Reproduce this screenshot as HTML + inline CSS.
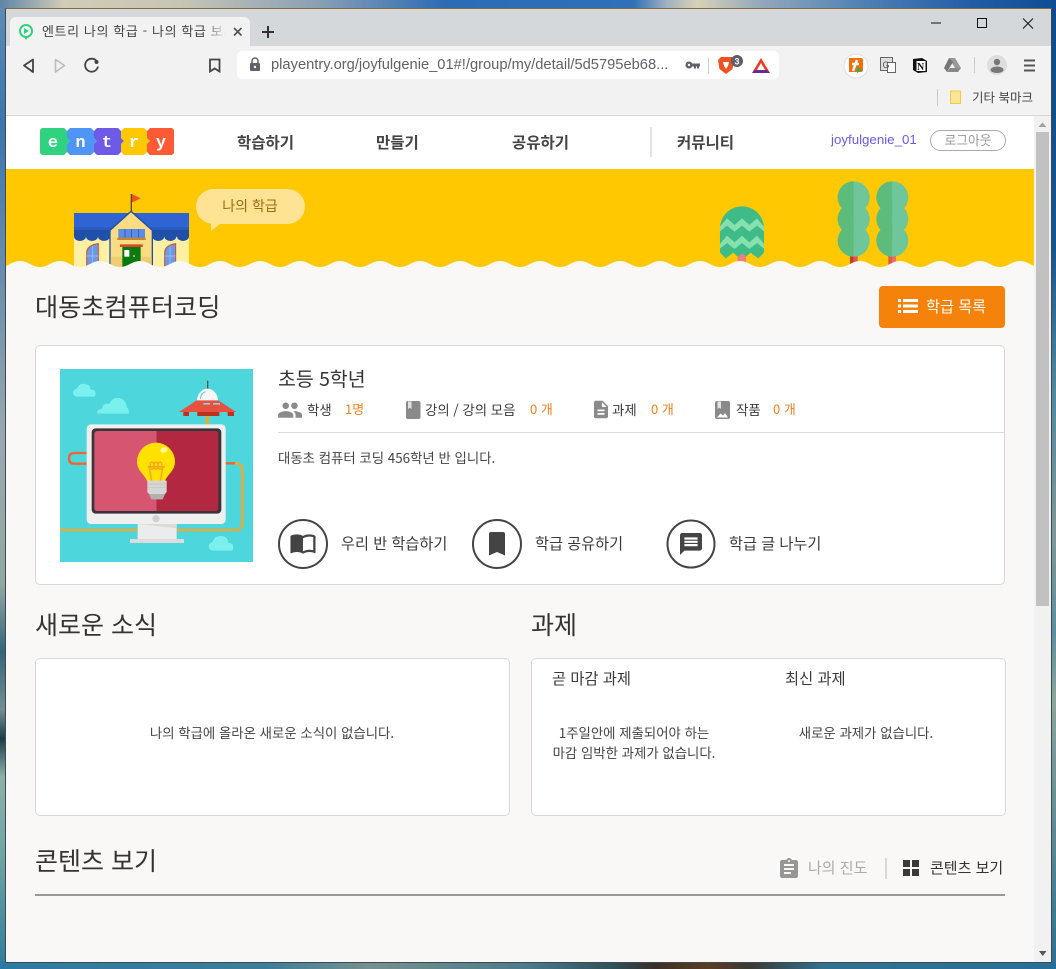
<!DOCTYPE html>
<html lang="ko"><head><meta charset="utf-8"><title>엔트리 나의 학급</title>
<style>
*{margin:0;padding:0;box-sizing:border-box}
html,body{width:1056px;height:969px;overflow:hidden;background:#2f6f9a}
body{position:relative;font-family:"Liberation Sans","Noto Sans CJK KR",sans-serif}
.b{position:absolute}
.t{position:absolute;white-space:nowrap;font-family:"Noto Sans CJK KR","Liberation Sans",sans-serif;color:#3a3a3a;line-height:20px;height:20px;font-weight:400}
.c{transform:translateX(-50%)}
.nav{font-size:15.5px;font-weight:700;color:#444;top:132px}
.st{font-size:13.400px;top:399px;color:#3a3a3a}
.n{font-size:13px;top:399px;color:#f58220}
.act{font-size:15.200px;top:533px;color:#3a3a3a}
.h{font-size:25px;line-height:36px;height:36px;color:#333}
.m{font-size:13.400px;color:#444}
.s{font-size:15.300px}
svg{position:absolute;left:0;top:0}
</style></head><body>
<div class="b" style="left:0;top:0;width:1056px;height:8px;background:linear-gradient(90deg,#5d85a8 0,#cfcdb5 6%,#c7c6b5 17%,#8aa0b5 30%,#2c6cb5 42%,#2f70b8 60%,#9db0c0 63%,#d7d2b8 66%,#93a8bb 72%,#4c80b5 82%,#225da6 92%,#0d4d94 100%)"></div>
<div class="b" style="left:0;top:8px;width:6px;height:961px;background:linear-gradient(180deg,#5d8cb5 0,#3c74ae 12%,#9aa9ad 45%,#91a8a2 60%,#34657a 67%,#728f92 73%,#1d3c4a 76%,#8eb0a8 80%,#6fa6a2 88%,#2f7b9d 100%)"></div>
<div class="b" style="left:1051px;top:8px;width:5px;height:961px;background:linear-gradient(180deg,#0d4b8e 0,#15558f 25%,#4f89a0 40%,#7f9895 55%,#5b8f9f 65%,#8ca59a 72%,#5f8c94 85%,#2a6f94 100%)"></div>
<div class="b" style="left:0;top:962px;width:1056px;height:7px;background:linear-gradient(90deg,#2a7ba2 0,#3e7d98 25%,#76908f 35%,#4b7a88 50%,#2f4f5a 58%,#3a3029 62%,#5c3d22 67%,#3a3a35 71%,#33708e 78%,#276f98 100%)"></div>

<!-- window -->
<div class="b" style="left:5px;top:8px;width:1047px;height:955px;background:#f9f8f7;border:1px solid #3f4a50;border-top-color:#8a6a3a"></div>
<div class="b" style="left:6px;top:9px;width:1045px;height:37px;background:#d5d8db"></div>
<div class="b" style="left:6px;top:46px;width:1045px;height:70px;background:#f2f2f2;border-bottom:1px solid #d6d6d6"></div>
<div class="b" style="left:10px;top:17px;width:240px;height:29px;background:#f2f2f2;border-radius:6px 6px 0 0"></div>
<div class="b" style="left:237px;top:51px;width:542px;height:28px;background:#fff;border-radius:5px"></div>
<div class="b" style="left:6px;top:116px;width:1028px;height:53px;background:#fff"></div>
<div class="b" style="left:6px;top:169px;width:1028px;height:100px;background:#ffc800"></div>
<div class="b" style="left:1034px;top:116px;width:17px;height:846px;background:#f1f1f1"></div>
<div class="b" style="left:1036px;top:132px;width:13px;height:474px;background:#c1c1c1"></div>

<!-- cards -->
<div class="b" style="left:35px;top:345px;width:970px;height:240px;background:#fff;border:1px solid #d8d8d8;border-radius:5px"></div>
<div class="b" style="left:278px;top:432px;width:726px;height:1px;background:#dcdcdc"></div>
<div class="b" style="left:35px;top:658px;width:475px;height:158px;background:#fff;border:1px solid #d8d8d8;border-radius:5px"></div>
<div class="b" style="left:531px;top:658px;width:475px;height:158px;background:#fff;border:1px solid #d8d8d8;border-radius:5px"></div>
<div class="b" style="left:35px;top:894px;width:970px;height:2px;background:#999"></div>
<div class="b" style="left:885px;top:858px;width:2px;height:21px;background:#d8d8d8"></div>
<div class="b" style="left:650px;top:127px;width:2px;height:30px;background:#e2e2e2"></div>
<div class="b" style="left:937px;top:89px;width:1px;height:17px;background:#c8c8c8"></div>
<div class="b" style="left:930px;top:130px;width:76px;height:21px;border:1px solid #aaa;border-radius:11px;background:#fff"></div>

<svg width="1056" height="969" viewBox="0 0 1056 969">
<defs>
<clipPath id="ban"><rect x="6" y="169" width="1028" height="100"/></clipPath>
<clipPath id="tl"><rect x="430" y="20" width="61" height="260"/><rect x="550" y="20" width="57" height="260"/></clipPath>
</defs>
<!-- tab icon -->
<circle cx="26" cy="31" r="6" fill="#fff" stroke="#2fd27e" stroke-width="2"/>
<path d="M24 28l5 3-5 3z" fill="#2fd27e"/><path d="M24 37h4l-2 3z" fill="#2fd27e"/>
<path d="M234 28l7.500 7.500M241.500 28l-7.500 7.500" stroke="#555" stroke-width="1.600"/>
<path d="M262 32h12M268 26v12" stroke="#333" stroke-width="2"/>
<!-- window controls -->
<path d="M931 23h10" stroke="#111" stroke-width="1"/>
<rect x="977.500" y="18.500" width="9" height="9" fill="none" stroke="#111"/>
<path d="M1023 18.500l10 10M1033 18.500l-10 10" stroke="#111"/>
<!-- nav -->
<path d="M33 59.500l-9 6 9 6.500z" fill="none" stroke="#444" stroke-width="1.800" stroke-linejoin="round"/>
<path d="M55.500 59.500l9 6-9 6.500z" fill="none" stroke="#bbb" stroke-width="1.600" stroke-linejoin="round"/>
<path d="M97 61.500a6.500 6.500 0 1 0 1 5" fill="none" stroke="#444" stroke-width="1.800"/><circle cx="96.500" cy="62" r="2" fill="#444"/>
<path d="M210 59.500h9.500v12l-4.750-3-4.750 3z" fill="none" stroke="#444" stroke-width="1.800"/>
<!-- lock -->
<rect x="250" y="63" width="10" height="8" rx="1" fill="#5f6368"/><path d="M252 63v-2a3 3 0 0 1 6 0v2" fill="none" stroke="#5f6368" stroke-width="1.500"/><circle cx="255" cy="67" r="1.200" fill="#fff"/>
<!-- key -->
<circle cx="689" cy="65" r="3.500" fill="#5f6368"/><path d="M691 63.500h9v3h-1v2h-2v-2h-1v2h-2v-2h-3z" fill="#5f6368"/><circle cx="689" cy="65" r="1.200" fill="#fff"/>
<path d="M708.500 58v16" stroke="#ccc"/>
<!-- brave -->
<path d="M721 57h11l2 3-1.500 9-6.500 5-6.500-5-1.500-9z" fill="#f1501f"/><path d="M723 62h6l-1 4-2 3-2-3z" fill="#fff"/>
<circle cx="737" cy="61" r="6" fill="#5b5f6b"/><text x="737" y="64.500" font-size="9" font-weight="700" fill="#fff" text-anchor="middle" font-family="Liberation Sans">3</text>
<path d="M761 58l9 15h-18z" fill="#f03a24"/><path d="M761 63l5 8.500h-10z" fill="#fff"/><path d="M752 73h18l-2.500-3h-13z" fill="#662d91"/>
<!-- ext -->
<circle cx="856" cy="66" r="12" fill="#fff" stroke="#e0e0e0"/>
<path d="M849 58h12a2 2 0 0 1 2 2v10a2 2 0 0 1-2 2h-12z" fill="#f26f0c"/><path d="M857 60l-4 11M852 64h7" stroke="#fff" stroke-width="2.500" fill="none"/><path d="M857 67l5 3-5 3z" fill="#2faf55"/>
<rect x="880.500" y="57.500" width="12" height="13" fill="#ddd" stroke="#666"/><rect x="887.500" y="62.500" width="8" height="10" fill="#fff" stroke="#666"/><text x="882.500" y="68" font-size="9" fill="#555" font-family="Liberation Sans">G</text>
<path d="M913 59l9-1 5 3v11l-9 1-5-3z" fill="#111"/><rect x="916.500" y="61" width="9" height="10" fill="#fff"/><text x="917" y="70" font-size="10" font-weight="700" fill="#111" font-family="Liberation Serif">N</text>
<path d="M949 58h6l6 10h-6z" fill="#999"/><path d="M949 58l-5 10 3 4 6-10z" fill="#777"/><path d="M947 72h11l3-4h-11z" fill="#888"/>
<path d="M974.500 57v16" stroke="#ccc"/>
<circle cx="997" cy="65" r="10" fill="#dedede"/><circle cx="997" cy="62" r="3.200" fill="#777"/><path d="M990.500 70a6.500 3.500 0 0 1 13 0a6.500 3 0 0 1-13 0z" fill="#777"/>
<path d="M1024 60.500h11M1024 65.500h11M1024 70.500h11" stroke="#555" stroke-width="2"/>
<!-- folder -->
<path d="M950.500 91h10v12.500h-10z" fill="#fde597" stroke="#f2c94c"/>
<!-- logo -->
<g font-family="Liberation Mono" font-weight="700" font-size="17" fill="#fff" text-anchor="middle">
<path d="M42 128h22l3 3v7l3 3-3 3v8l-3 3H42l-2-2v-23z" fill="#2fd27e"/>
<path d="M70 128h21l3 3v7l3 3-3 3v8l-3 3H70l-3-3v-8l3-3-3-3v-7z" fill="#4f95f5"/>
<path d="M97 128h21l3 3v7l3 3-3 3v8l-3 3H97l-3-3v-8l3-3-3-3v-7z" fill="#6e5ae6"/>
<path d="M124 128h20l3 3v7l3 3-3 3v8l-3 3h-20l-3-3v-8l3-3-3-3v-7z" fill="#ffc800"/>
<path d="M150 128h22l2 2v23l-2 2h-22l-3-3v-8l3-3-3-3v-7z" fill="#ff5a36"/>
<text x="53" y="147">e</text><text x="80.500" y="147">n</text><text x="107" y="147">t</text><text x="134" y="147">r</text><text x="161" y="147">y</text>
</g>
<!-- bubble -->
<rect x="196" y="189" width="109" height="35" rx="17.500" fill="#ffe394"/><path d="M211 221v10l9-7z" fill="#ffe394"/>

<g clip-path="url(#ban)">
<!-- school -->
<g transform="translate(30,170) scale(.33333)">
<path d="M302 72h4v55h-4z" fill="#5b4a2a"/><path d="M306 72l26 13-26 12z" fill="#f4511e"/>
<rect x="132" y="129" width="345" height="50" fill="#3063d3"/>
<rect x="132" y="200" width="108" height="95" fill="#fdf0a3"/><rect x="367" y="200" width="110" height="95" fill="#fdf0a3"/>
<g fill="#2a5abd"><rect x="132" y="172" width="345" height="12"/></g>
<g fill="#2050a8"><rect x="132" y="180" width="345" height="20"/>
<ellipse cx="150" cy="199" rx="18" ry="14"/><ellipse cx="186" cy="199" rx="18" ry="14"/><ellipse cx="222" cy="199" rx="18" ry="14"/>
<ellipse cx="385" cy="199" rx="18" ry="14"/><ellipse cx="421" cy="199" rx="18" ry="14"/><ellipse cx="459" cy="199" rx="18" ry="14"/></g>
<path d="M303 124l-63 57v114h127v-114z" fill="#fcdc82" stroke="#2050a8" stroke-width="4"/>
<rect x="242" y="260" width="123" height="36" fill="#edcd71"/>
<rect x="265" y="177" width="80" height="28" fill="#5b8de8"/><path d="M285 177v28M305 177v28M325 177v28" stroke="#2050a8" stroke-width="2"/>
<rect x="262" y="203" width="85" height="7" fill="#c5852c"/>
<rect x="270" y="223" width="68" height="8" fill="#d9482b"/>
<rect x="277" y="231" width="55" height="62" fill="#0a7a10"/><rect x="283" y="240" width="15" height="20" fill="#fff"/><circle cx="312" cy="258" r="3" fill="#e6c34a"/>
<path d="M170 295v-50q4-20 35-24v74z" fill="#6a9ae6" stroke="#d9482b" stroke-width="3"/>
<path d="M404 295v-50q4-20 33-24v74z" fill="#6a9ae6" stroke="#d9482b" stroke-width="3"/>
<path d="M187 230v65M170 258h35M420 230v65M404 258h33" stroke="#a9c4f0" stroke-width="2"/>
</g>
<!-- trees -->
<g transform="translate(690,170) scale(.33333)">
<rect x="143" y="248" width="25" height="45" fill="#ef7e7e"/>
<path d="M90 175a66 66 0 0 1 132 0v73l-17 17-23-17-14 12-12-10-13 10-13-12-23 17-17-17z" fill="#3fbb87"/>
<path d="M90 170l21-25 23 20 22-20 22 20 23-20 21 25v14l-21-17-23 18-22-18-22 18-23-18-21 17zM90 222l21-25 23 20 22-20 22 20 23-20 21 25v14l-21-17-23 18-22-18-22 18-23-18-21 17z" fill="#88e0ae"/>
<rect x="480" y="255" width="12" height="40" fill="#c43c2d"/><rect x="491" y="255" width="12" height="40" fill="#e0584a"/>
<rect x="595" y="255" width="12" height="40" fill="#e0584a"/><rect x="607" y="255" width="11" height="40" fill="#ec7066"/>
<g fill="#6ec69a"><circle cx="491" cy="82" r="48"/><circle cx="491" cy="147" r="48"/><circle cx="491" cy="212" r="48"/><circle cx="607" cy="82" r="48"/><circle cx="607" cy="147" r="48"/><circle cx="607" cy="212" r="48"/></g>
<g fill="#5dbc7c" clip-path="url(#tl)"><circle cx="491" cy="82" r="48"/><circle cx="491" cy="147" r="48"/><circle cx="491" cy="212" r="48"/><circle cx="607" cy="82" r="48"/><circle cx="607" cy="147" r="48"/><circle cx="607" cy="212" r="48"/></g>
</g>
<!-- waves -->
<path fill="#f9f8f7" d="M0 267C8 267 12 261 20 261S32 267 40 267 52 261 60 261 72 267 80 267 92 261 100 261 112 267 120 267 132 261 140 261 152 267 160 267 172 261 180 261 192 267 200 267 212 261 220 261 232 267 240 267 252 261 260 261 272 267 280 267 292 261 300 261 312 267 320 267 332 261 340 261 352 267 360 267 372 261 380 261 392 267 400 267 412 261 420 261 432 267 440 267 452 261 460 261 472 267 480 267 492 261 500 261 512 267 520 267 532 261 540 261 552 267 560 267 572 261 580 261 592 267 600 267 612 261 620 261 632 267 640 267 652 261 660 261 672 267 680 267 692 261 700 261 712 267 720 267 732 261 740 261 752 267 760 267 772 261 780 261 792 267 800 267 812 261 820 261 832 267 840 267 852 261 860 261 872 267 880 267 892 261 900 261 912 267 920 267 932 261 940 261 952 267 960 267 972 261 980 261 992 267 1000 267 1012 261 1020 261 1032 267 1040 267V280H0z"/>
</g>
<!-- scroll arrows -->
<path d="M1038.500 127l4-4.500 4 4.500z" fill="#a0a0a0"/><path d="M1039 951h7.500l-3.750 5z" fill="#555"/>
<!-- button -->
<rect x="879" y="286" width="126" height="42" rx="4" fill="#f4820b"/>
<path d="M898 299h3v3h-3zM898 304.500h3v3h-3zM898 310h3v3h-3zM903 299h15v3h-15zM903 304.500h15v3h-15zM903 310h15v3h-15z" fill="#fff"/>
<!-- thumb -->
<g transform="translate(50,360) scale(.33333)">
<rect x="30" y="27" width="579" height="579" fill="#4dd6dc"/>
<g fill="#7af0ef"><path d="M82 110a12 12 0 0 1-2-24q8-18 26-14t14 16q16 0 17 12t-12 10z"/><path d="M142 161v-7q4-6 14-8 2-18 22-14 8-20 28-18t25 28q6 4 6 19z"/><path d="M490 572a13 13 0 0 1-2-26q6-20 26-18t20 20q16 2 16 14t-10 10z"/></g>
<path d="M30 510h233M380 510h175q22 0 22-22V332q0-22-22-22" fill="none" stroke="#f7a722" stroke-width="7"/>
<path d="M527 310h28" fill="none" stroke="#f0652c" stroke-width="7"/>
<path d="M110 279H73q-16 0-16 16t16 16h37" fill="none" stroke="#f0652c" stroke-width="7"/>
<rect x="467" y="165" width="10" height="30" fill="#f5a623"/>
<rect x="471" y="62" width="4" height="26" fill="#555"/>
<path d="M441 122a31.500 36 0 0 1 63 0z" fill="#f7f7f7"/><path d="M451 117q2-18 16-22" fill="none" stroke="#5ac8f0" stroke-width="3"/>
<path d="M387 156l53-35h65l53 35z" fill="#e8503f"/>
<path d="M442 156h66v12h-66zM400 156h17v12h-17zM533 156h19v12h-19z" fill="#b8321f"/>
<path d="M460 129h20v5h-20zM489 129h21v5h-21z" fill="#7fd4ee"/>
<rect x="110" y="193" width="417" height="299" rx="13" fill="#efefef"/>
<path d="M263 492h117v45H263z" fill="#ececec"/><path d="M263 492h117v13z" fill="#dadada"/>
<rect x="240" y="537" width="162" height="12" fill="#dcdcdc"/>
<circle cx="318" cy="476" r="11" fill="#d0d0d0"/>
<rect x="125" y="205" width="389" height="256" rx="12" fill="#38353a"/>
<path d="M133 221a8 8 0 0 1 8-8H320V453H141a8 8 0 0 1-8-8z" fill="#d65570"/>
<path d="M320 213H497a8 8 0 0 1 8 8V445a8 8 0 0 1-8 8H320z" fill="#b22840"/>
<path d="M318 248a57 57 0 0 0-57 57c0 28 23 38 30 58h54c7-20 30-30 30-58a57 57 0 0 0-57-57z" fill="#ffe100"/>
<ellipse cx="342" cy="270" rx="11" ry="8" fill="#fff59a" transform="rotate(-20 342 270)"/>
<g fill="none" stroke="#f7a31c" stroke-width="4"><path d="M305 362l-8-42M331 362l8-42M293 320h52"/><ellipse cx="306" cy="317" rx="6" ry="11"/><ellipse cx="318" cy="317" rx="6" ry="11"/><ellipse cx="330" cy="317" rx="6" ry="11"/></g>
<path d="M292 362h58v34l-5 6h-48l-5-6z" fill="#d6d6d6"/>
<path d="M294 372h54M294 382h54" stroke="#c2c2c2" stroke-width="2"/>
<path d="M297 402h48l-7 16h-34z" fill="#b0b0b0"/>
</g>
<!-- stat icons -->
<g fill="#8a8a8a">
<path transform="translate(277,397) scale(1.090)" d="M16 11c1.660 0 2.990-1.340 2.990-3S17.660 5 16 5c-1.660 0-3 1.340-3 3s1.340 3 3 3zm-8 0c1.660 0 2.990-1.340 2.990-3S9.660 5 8 5C6.340 5 5 6.340 5 8s1.340 3 3 3zm0 2c-2.330 0-7 1.170-7 3.500V19h14v-2.500c0-2.330-4.670-3.500-7-3.500zm8 0c-.29 0-.62.02-.97.05 1.160.84 1.970 1.970 1.970 3.450V19h6v-2.500c0-2.330-4.670-3.500-7-3.500z"/>
<rect x="406" y="401" width="14.500" height="18" rx="2"/>
<path transform="translate(590.500,399) scale(.875)" d="M14 2H6c-1.100 0-1.990.9-1.990 2L4 20c0 1.100.89 2 1.990 2H18c1.100 0 2-.9 2-2V8l-6-6zm2 16H8v-2h8v2zm0-4H8v-2h8v2zm-3-5V3.500L18.500 9H13z"/>
<rect x="715" y="401" width="15" height="18" rx="2"/>
</g>
<path d="M408 401.500h3.500v7.500l-1.750-1.300-1.750 1.300z" fill="#e2e2e2"/>
<path d="M717.500 401.500h3.500v7.500l-1.750-1.300-1.750 1.300z" fill="#e2e2e2"/>
<path d="M717 417.500l3.500-4 2.500 2 2-2.500 3 4.500z" fill="#fff"/>
<!-- action icons -->
<g fill="none" stroke="#444" stroke-width="2"><circle cx="303" cy="544" r="24"/><circle cx="497" cy="544" r="24"/><circle cx="691" cy="544" r="23.500"/></g>
<path transform="translate(289.300,529.200) scale(1.140)" fill="#444" d="M21 5c-1.110-.35-2.330-.5-3.500-.5-1.950 0-4.050.4-5.500 1.500-1.450-1.100-3.550-1.500-5.500-1.500S2.450 4.900 1 6v14.650c0 .25.25.5.5.5.1 0 .15-.05.25-.05C3.100 20.450 5.050 20 6.500 20c1.950 0 4.050.4 5.500 1.500 1.350-.85 3.800-1.500 5.500-1.500 1.650 0 3.350.3 4.750 1.050.1.05.15.05.25.05.25 0 .5-.25.5-.5V6c-.6-.45-1.250-.75-2-1zm0 13.500c-1.100-.35-2.300-.5-3.500-.5-1.700 0-4.150.65-5.500 1.500V8c1.350-.85 3.800-1.500 5.500-1.500 1.200 0 2.400.15 3.500.5v11.500z"/>
<path d="M491 532h12a2 2 0 0 1 2 2v21.500l-8-3.500-8 3.500V534a2 2 0 0 1 2-2z" fill="#444"/>
<path transform="translate(677.800,530.800) scale(1.100)" fill="#444" d="M20 2H4c-1.100 0-1.990.9-1.990 2L2 22l4-4h14c1.100 0 2-.9 2-2V4c0-1.100-.9-2-2-2zm-2 12H6v-2h12v2zm0-3H6V9h12v2zm0-3H6V6h12v2z"/>
<!-- bottom icons -->
<path transform="translate(777,857)" fill="#969696" d="M19 3h-4.180C14.400 1.840 13.300 1 12 1c-1.300 0-2.400.84-2.820 2H5c-1.100 0-2 .9-2 2v14c0 1.100.9 2 2 2h14c1.100 0 2-.9 2-2V5c0-1.100-.9-2-2-2zm-7 0c.55 0 1 .45 1 1s-.45 1-1 1-1-.45-1-1 .45-1 1-1zm2 14H7v-2h7v2zm3-4H7v-2h10v2zm0-4H7V7h10v2z"/>
<path d="M903 860h7v7h-7zM912 860h7v7h-7zM903 869h7v7h-7zM912 869h7v7h-7z" fill="#3a3a3a"/>
</svg>

<!-- text -->
<div class="t" style="left:42px;top:21px;width:184px;overflow:hidden;font-size:13px;letter-spacing:.6px;color:#444;-webkit-mask-image:linear-gradient(90deg,#000 88%,transparent 100%);mask-image:linear-gradient(90deg,#000 88%,transparent 100%)">엔트리 나의 학급 - 나의 학급 보기</div>
<div class="t" style="left:271px;top:55px;font-family:'Liberation Sans',sans-serif;font-size:14.700px;color:#5f6368;width:410px">playentry.org/joyfulgenie_01#!/group/my/detail/5d5795eb68...</div>
<div class="t" style="left:972px;top:87px;font-size:12.500px;color:#444">기타 북마크</div>
<div class="t nav" style="left:237px">학습하기</div>
<div class="t nav" style="left:376px">만들기</div>
<div class="t nav" style="left:512px">공유하기</div>
<div class="t nav" style="left:677px">커뮤니티</div>
<div class="t" style="left:831px;top:130px;font-family:'Liberation Sans',sans-serif;font-size:13.300px;color:#6e5ae6">joyfulgenie_01</div>
<div class="t c" style="left:968px;top:130px;font-size:12.800px;color:#979797">로그아웃</div>
<div class="t c" style="left:250px;top:196px;font-size:14px;color:#9a6d10">나의 학급</div>
<div class="t h" style="left:35px;top:288px;font-size:25.200px">대동초컴퓨터코딩</div>
<div class="t" style="left:926px;top:296px;font-size:15.200px;color:#fff">학급 목록</div>
<div class="t" style="left:278px;top:368px;font-size:19.400px;color:#333">초등 5학년</div>
<div class="t st" style="left:307px">학생</div><div class="t n" style="left:345px">1명</div>
<div class="t st" style="left:425px">강의 / 강의 모음</div><div class="t n" style="left:530px">0 개</div>
<div class="t st" style="left:612px">과제</div><div class="t n" style="left:651px">0 개</div>
<div class="t st" style="left:736px">작품</div><div class="t n" style="left:773px">0 개</div>
<div class="t m" style="left:278px;top:447px">대동초 컴퓨터 코딩 456학년 반 입니다.</div>
<div class="t act" style="left:341px">우리 반 학습하기</div>
<div class="t act" style="left:535px">학급 공유하기</div>
<div class="t act" style="left:729px">학급 글 나누기</div>
<div class="t h" style="left:35px;top:606px">새로운 소식</div>
<div class="t h" style="left:531px;top:606px">과제</div>
<div class="t c m" style="left:272px;top:722px">나의 학급에 올라온 새로운 소식이 없습니다.</div>
<div class="t s" style="left:552px;top:668px">곧 마감 과제</div>
<div class="t s" style="left:785px;top:668px">최신 과제</div>
<div class="t c m" style="left:634px;top:722px">1주일안에 제출되어야 하는</div>
<div class="t c m" style="left:634px;top:742px">마감 임박한 과제가 없습니다.</div>
<div class="t c m" style="left:866px;top:722px">새로운 과제가 없습니다.</div>
<div class="t h" style="left:35px;top:842px">콘텐츠 보기</div>
<div class="t" style="left:808px;top:858px;font-size:15px;color:#aaa">나의 진도</div>
<div class="t" style="left:930px;top:858px;font-size:15px;color:#333">콘텐츠 보기</div>
</body></html>
